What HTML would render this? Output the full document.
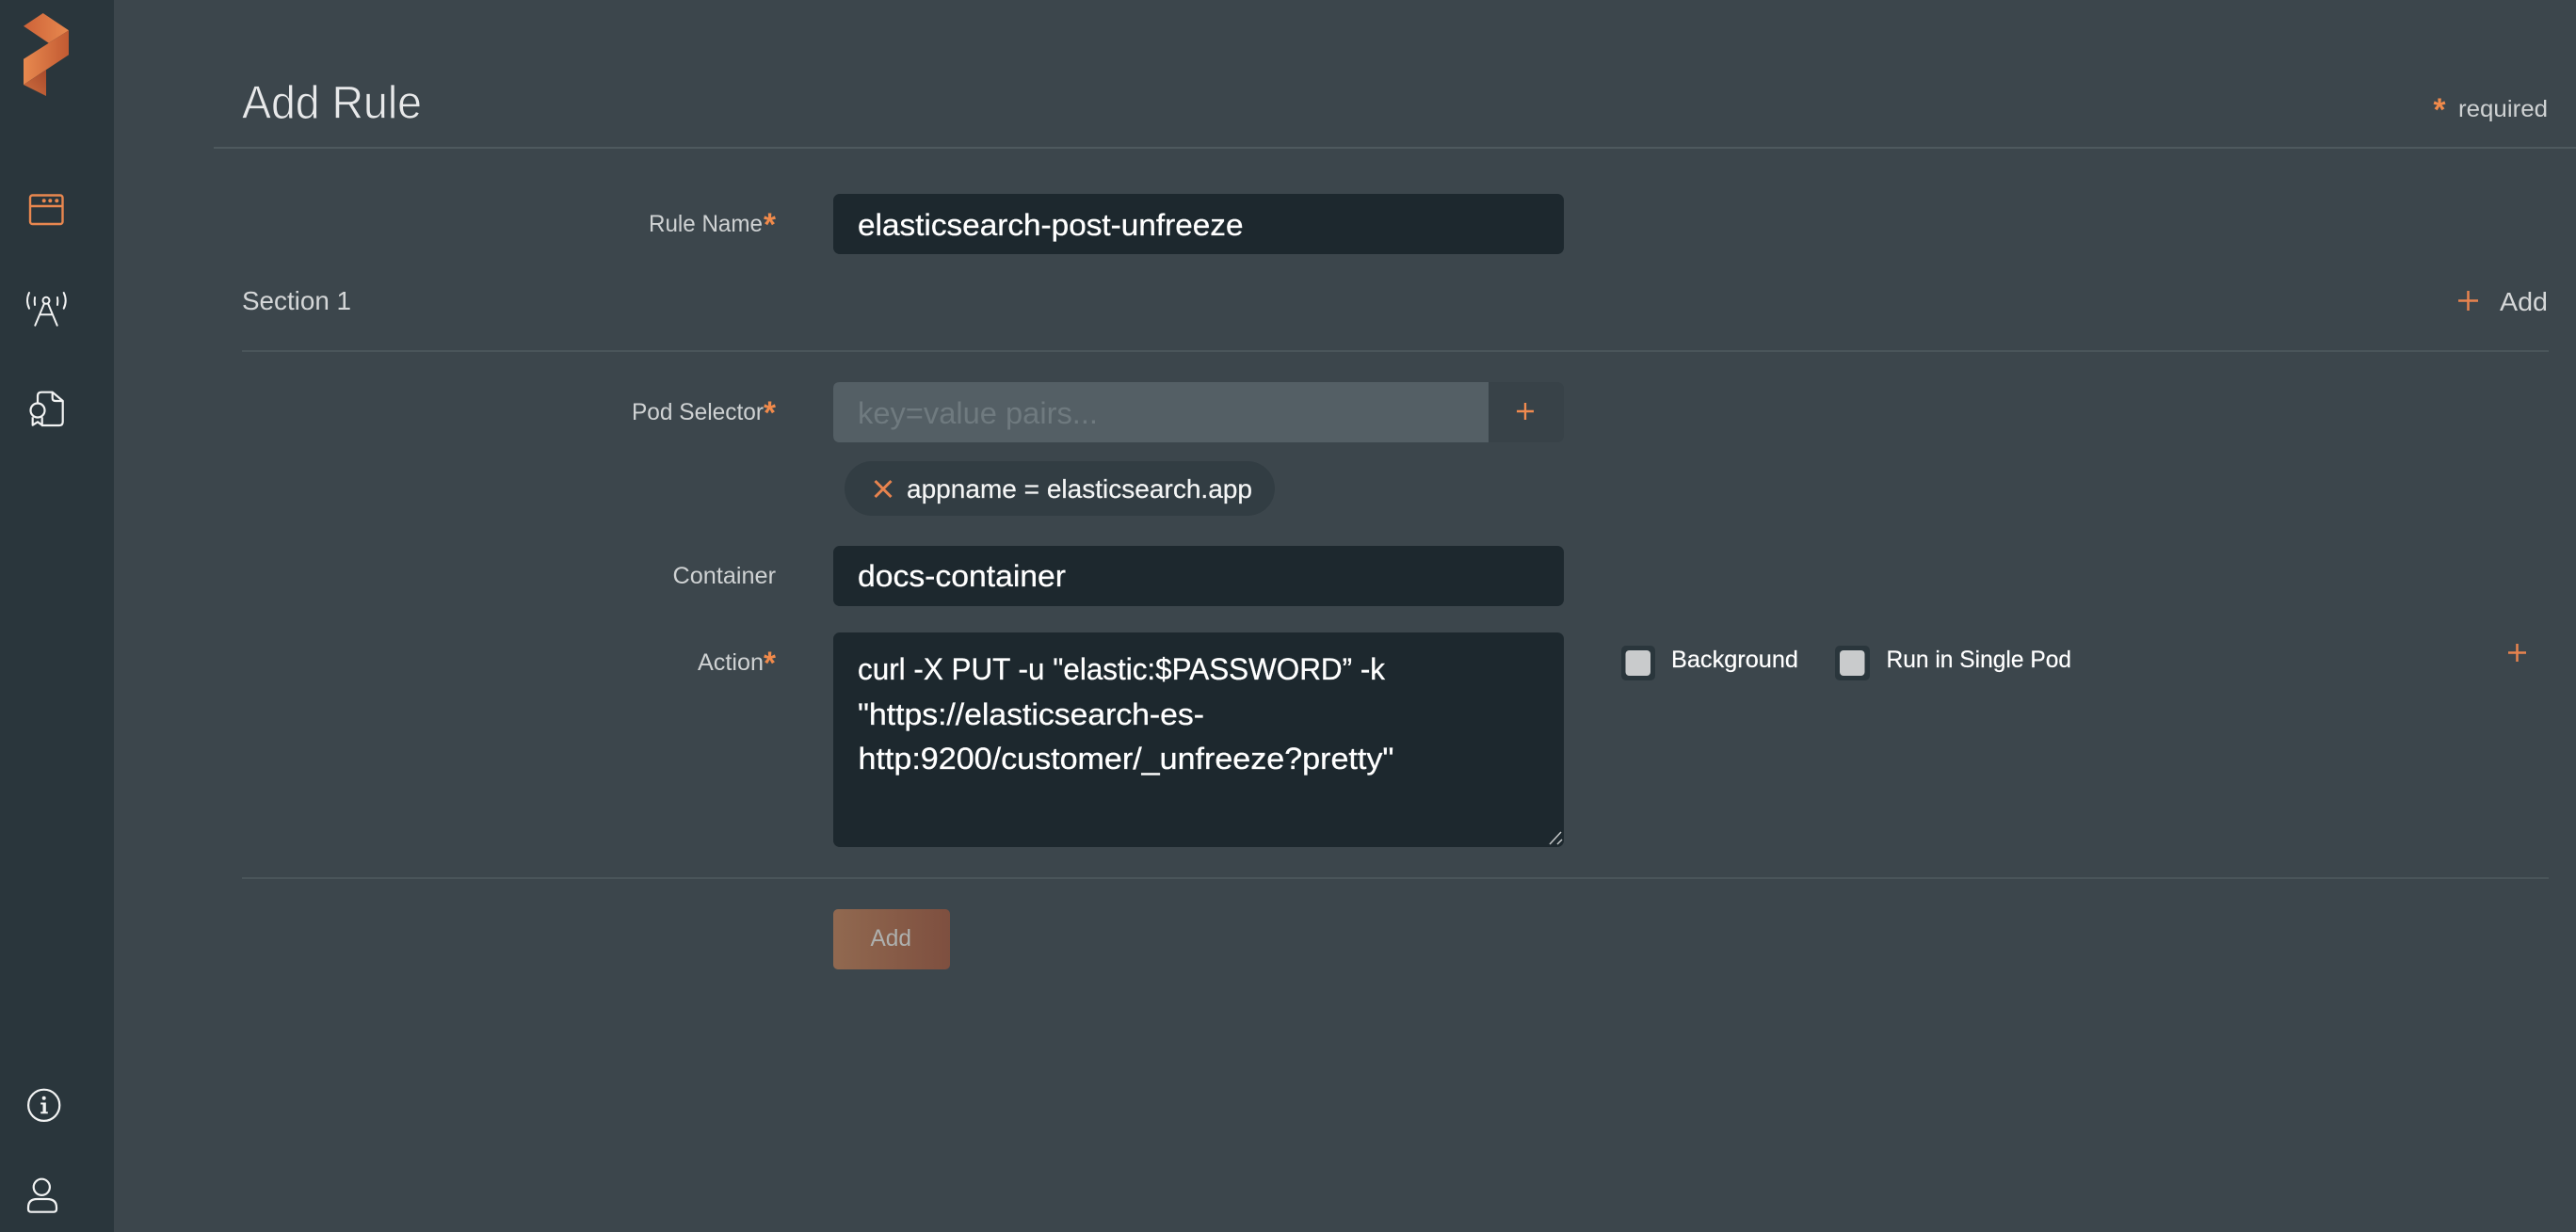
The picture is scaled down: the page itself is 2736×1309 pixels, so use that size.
<!DOCTYPE html>
<html lang="en">
<head>
<meta charset="utf-8">
<title>Add Rule</title>
<style>
html,body{margin:0;padding:0;width:2736px;height:1309px;overflow:hidden;background:#3c464c}
svg{display:block}
text{font-family:"Liberation Sans",sans-serif;white-space:pre}
.star{font-weight:bold;font-size:34px;fill:#f08a4b}
.w{fill:#fff;stroke:#fff;stroke-width:.3px}
</style>
</head>
<body>
<svg xmlns="http://www.w3.org/2000/svg" width="2736" height="1309" viewBox="0 0 2736 1309">
<defs>
<linearGradient id="g1" x1="0" y1="0" x2="1" y2="0"><stop offset="0" stop-color="#cd6238"/><stop offset="1" stop-color="#e8894f"/></linearGradient>
<linearGradient id="g2" x1="0" y1="0" x2="1" y2="0"><stop offset="0" stop-color="#e8894f"/><stop offset="1" stop-color="#c25a32"/></linearGradient>
<linearGradient id="g3" x1="1" y1="0" x2="0" y2="1"><stop offset="0" stop-color="#a94a2b"/><stop offset="1" stop-color="#d07040"/></linearGradient>
<linearGradient id="g4" x1="0" y1="0" x2="1" y2="0"><stop offset="0" stop-color="#916950"/><stop offset="1" stop-color="#7e4f3f"/></linearGradient>
</defs>

<rect width="2736" height="1309" fill="#3c464c"/>
<rect width="121" height="1309" fill="#2a363c"/>

<!-- logo -->
<polygon points="25,27.700 45.700,14 73,32.300 51.700,45.700" fill="url(#g1)"/>
<polygon points="73,32.300 73,58.300 25,90 25,62.700" fill="url(#g2)"/>
<polygon points="25,90 49,74.300 49,102" fill="url(#g3)"/>

<!-- browser icon -->
<g fill="none" stroke="#e8874f" stroke-width="2.400">
<rect x="32" y="207.500" width="34.500" height="30.500" rx="2.500"/>
<path d="M32 219H66.500"/>
</g>
<g fill="#e8874f"><circle cx="46.700" cy="213.300" r="2"/><circle cx="53.300" cy="213.300" r="2"/><circle cx="60.300" cy="213.300" r="2"/></g>

<!-- tower icon -->
<g fill="none" stroke="#f2f3f3" stroke-width="2" stroke-linecap="round">
<circle cx="49" cy="319.300" r="3.500"/>
<path d="M46.700 323.300L37.300 345.700M51.300 323.300L60.700 345.700M42.300 334.300H55.700"/>
<path d="M31 311Q27 319.300 31 327.700M37 316Q36.400 320 37 324M67.700 311Q71.700 319.300 67.700 327.700M61 316Q61.600 320 61 324"/>
</g>

<!-- certificate icon -->
<g fill="none" stroke="#f2f3f3" stroke-width="2.200" stroke-linejoin="round">
<path d="M40 428V421Q40 416.700 44 416.700H55.700L66.700 426V448Q66.700 452 63 452H44"/>
<path d="M55.700 416.700V423Q55.700 426 59 426H66.700"/>
<circle cx="40" cy="436" r="7.500"/>
<path d="M34.700 443.300V451.700L40 448.300L44.700 451.700V443.300"/>
</g>

<!-- info icon -->
<g fill="none" stroke="#f2f3f3" stroke-width="2.200"><circle cx="46.700" cy="1174.300" r="16.600"/></g>
<g fill="#f2f3f3"><circle cx="46.700" cy="1166.700" r="2"/><path d="M43.200 1171.500H48.800V1181.200H50.800V1183.200H43.200V1181.200H45.500V1173.500H43.200Z"/></g>

<!-- user icon -->
<g fill="none" stroke="#f2f3f3" stroke-width="2.200">
<circle cx="44.300" cy="1261.300" r="8.600"/>
<path d="M33 1287.700H57Q60 1287.700 60 1284.500V1283Q60 1274 50 1274H39.500Q30 1274 30 1283V1284.500Q30 1287.700 33 1287.700Z"/>
</g>

<!-- header -->
<text x="257" y="125.500" font-size="49" fill="#e8e9ea" stroke="#3c464c" stroke-width=".8" textLength="191" lengthAdjust="spacingAndGlyphs">Add Rule</text>
<text x="2584.500" y="128" class="star" textLength="13" lengthAdjust="spacingAndGlyphs">*</text>
<text x="2611" y="124" font-size="25" fill="#cfd2d3" textLength="95" lengthAdjust="spacingAndGlyphs">required</text>
<rect x="227" y="156" width="2509" height="2" fill="#4e595e"/>

<!-- rule name -->
<text x="689" y="246" font-size="25" fill="#cfd2d3" textLength="121" lengthAdjust="spacingAndGlyphs">Rule Name</text>
<text x="811" y="250" class="star" textLength="13" lengthAdjust="spacingAndGlyphs">*</text>
<rect x="885" y="206" width="776" height="64" rx="7" fill="#1d282e"/>
<text x="911" y="250" font-size="32" class="w" textLength="409.500" lengthAdjust="spacingAndGlyphs">elasticsearch-post-unfreeze</text>

<!-- section header -->
<text x="257" y="329" font-size="28" fill="#d5d7d8" textLength="116" lengthAdjust="spacingAndGlyphs">Section 1</text>
<path d="M2611 319.500H2632M2621.500 309V330" stroke="#e8834e" stroke-width="2.500" fill="none"/>
<text x="2655" y="330" font-size="28" fill="#d5d7d8" textLength="51" lengthAdjust="spacingAndGlyphs">Add</text>
<rect x="257" y="372" width="2450" height="2" fill="#4a555a"/>

<!-- pod selector -->
<text x="671" y="446" font-size="25" fill="#cfd2d3" textLength="140" lengthAdjust="spacingAndGlyphs">Pod Selector</text>
<text x="811" y="450" class="star" textLength="13" lengthAdjust="spacingAndGlyphs">*</text>
<rect x="885" y="406" width="776" height="64" rx="7" fill="#384248"/>
<path d="M892 406H1581V470H892Q885 470 885 463V413Q885 406 892 406Z" fill="#545f65"/>
<text x="911" y="450" font-size="32" fill="#6f7a7f" textLength="255" lengthAdjust="spacingAndGlyphs">key=value pairs...</text>
<path d="M1611 437H1629M1620 428V446" stroke="#f08a4f" stroke-width="2.400" fill="none"/>

<!-- chip -->
<rect x="897" y="490" width="457" height="58" rx="29" fill="#323d43"/>
<path d="M929.500 511L946.500 528M946.500 511L929.500 528" stroke="#e8834e" stroke-width="3" fill="none"/>
<text x="963" y="529" font-size="28" class="w" style="fill:#f4f5f5;stroke:#f4f5f5;stroke-width:.2px" textLength="367" lengthAdjust="spacingAndGlyphs">appname = elasticsearch.app</text>

<!-- container -->
<text x="714.500" y="620" font-size="25" fill="#cfd2d3" textLength="109.500" lengthAdjust="spacingAndGlyphs">Container</text>
<rect x="885" y="580" width="776" height="64" rx="7" fill="#1d282e"/>
<text x="911" y="623" font-size="32" class="w" textLength="221" lengthAdjust="spacingAndGlyphs">docs-container</text>

<!-- action -->
<text x="741" y="712" font-size="25" fill="#cfd2d3" textLength="70" lengthAdjust="spacingAndGlyphs">Action</text>
<text x="811" y="716" class="star" textLength="13" lengthAdjust="spacingAndGlyphs">*</text>
<rect x="885" y="672" width="776" height="228" rx="7" fill="#1d282e"/>
<text x="911" y="722" font-size="32" class="w" textLength="560" lengthAdjust="spacingAndGlyphs">curl -X PUT -u "elastic:$PASSWORD” -k</text>
<text x="911" y="770" font-size="32" class="w" textLength="368" lengthAdjust="spacingAndGlyphs">"https://elasticsearch-es-</text>
<text x="911.500" y="817" font-size="32" class="w" textLength="569" lengthAdjust="spacingAndGlyphs">http:9200/customer/_unfreeze?pretty"</text>
<path d="M1658 884L1646 897M1659 892L1654 897" stroke="#c4c7c8" stroke-width="1.500" fill="none"/>

<!-- checkboxes -->
<rect x="1722" y="686" width="36" height="37" rx="5" fill="#2a363c"/>
<rect x="1726.500" y="691" width="26.500" height="27" rx="4" fill="#c9cbcc"/>
<text x="1775" y="709" font-size="25" class="w" style="stroke-width:.2px" textLength="135" lengthAdjust="spacingAndGlyphs">Background</text>
<rect x="1949" y="686" width="37" height="37" rx="5" fill="#2a363c"/>
<rect x="1954" y="691" width="26.500" height="27" rx="4" fill="#c9cbcc"/>
<text x="2003.500" y="709" font-size="25" class="w" style="stroke-width:.2px" textLength="196.500" lengthAdjust="spacingAndGlyphs">Run in Single Pod</text>
<path d="M2664 693.500H2683M2673.500 684V703" stroke="#e8834e" stroke-width="2.500" fill="none"/>

<rect x="257" y="932" width="2450" height="2" fill="#4a555a"/>

<!-- add button -->
<rect x="885" y="966" width="124" height="64" rx="5" fill="url(#g4)"/>
<text x="924.500" y="1005" font-size="25" fill="#aeb0ae" textLength="43.500" lengthAdjust="spacingAndGlyphs">Add</text>
</svg>
</body>
</html>
